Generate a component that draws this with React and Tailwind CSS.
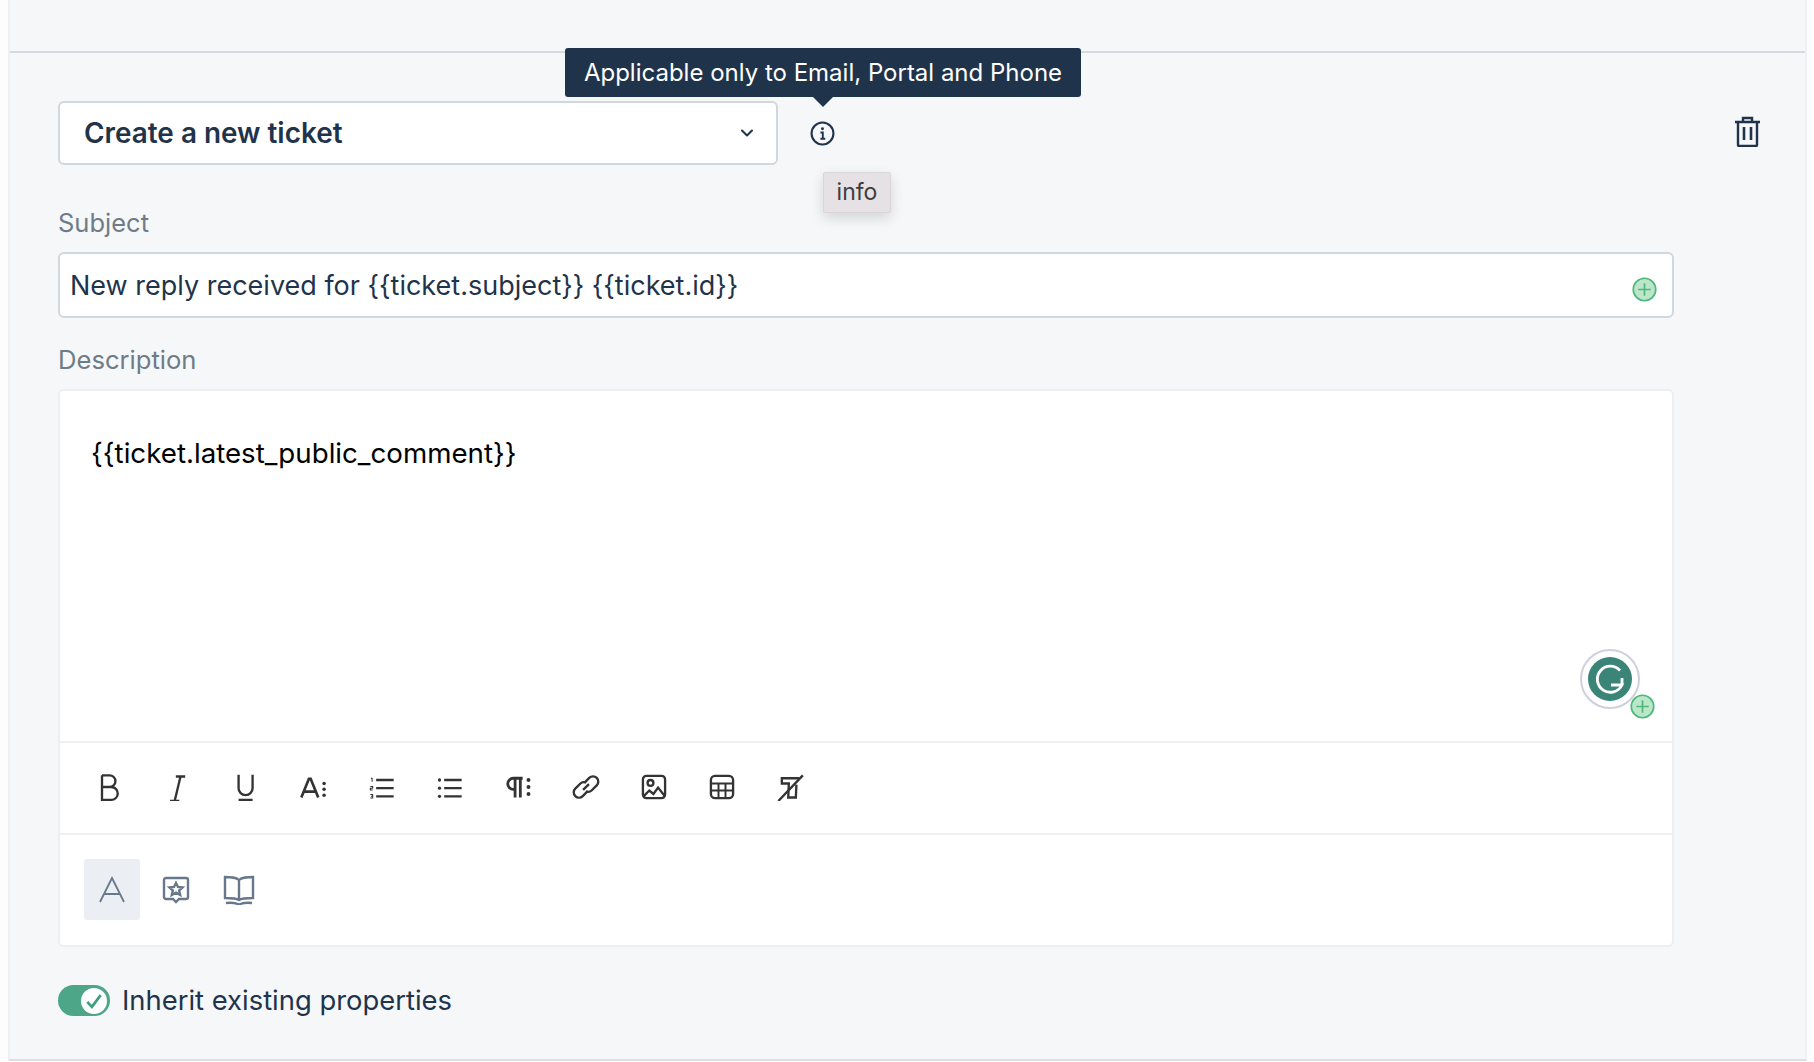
import { ChevronDown } from 'lucide-react';

// Add-variable bubble used in the subject field and on the Grammarly badge
const PlusBubble = ({ className = '' }) => (
  <svg viewBox="0 0 24 24" className={`w-[25px] h-[25px] ${className}`}>
    <circle cx="12" cy="12" r="10.8" fill="#bce6cb" stroke="#4fb878" strokeWidth="1.6" />
    <path d="M12 6v12M6 12h12" stroke="#4fb878" strokeWidth="1.6" fill="none" />
  </svg>
);

const toolbarIcons = [
  <path key="b" d="M6 2v21h8a5.500 5.500 0 0 0 0-11H6m0 0h6.500a5 5 0 0 0 0-10H6" strokeWidth="2" />,
  <path key="i" d="M11 3h8M6 24h8M15 3 10 24" strokeWidth="2" />,
  <path key="u" d="M6.500 1.500v11.500a6 6 0 0 0 12 0V1.500M6.500 23h12" strokeWidth="2" />,
  <g key="a">
    <path d="M2 21 8.500 5h1.500L16.500 21M4.500 16h9.500" strokeWidth="2.300" />
    <circle cx="21.500" cy="9" r="1.500" fill="#333" stroke="none" />
    <circle cx="21.500" cy="14" r="1.500" fill="#333" stroke="none" />
    <circle cx="21.500" cy="19" r="1.500" fill="#333" stroke="none" />
  </g>,
  <g key="ol">
    <path d="M7 6h15M7 13h15M7 20h15" strokeWidth="2" />
    <path d="M2.500 4.500h1v3M2 11.500h2v1.500H2v1.500h2M2 18.500h2v3H2M2.500 20h1.500" strokeWidth="0.900" />
  </g>,
  <g key="ul">
    <path d="M7 6h15M7 13h15M7 20h15" strokeWidth="2" />
    <circle cx="3" cy="6" r="1.400" fill="#333" stroke="none" />
    <circle cx="3" cy="13" r="1.400" fill="#333" stroke="none" />
    <circle cx="3" cy="20" r="1.400" fill="#333" stroke="none" />
  </g>,
  <g key="p">
    <path d="M9.500 21V4.500M14 21V4.500M16 4.500H8a4.800 4.800 0 0 0 0 9.600h1.500" strokeWidth="2.400" />
    <circle cx="21" cy="6" r="1.700" fill="#333" stroke="none" />
    <circle cx="21" cy="12" r="1.700" fill="#333" stroke="none" />
    <circle cx="21" cy="18" r="1.700" fill="#333" stroke="none" />
  </g>,
  <g key="link" strokeWidth="2">
    <path d="M11 8 14.800 4.200a4.500 4.500 0 0 1 6.400 6.400L17 14.800a4.500 4.500 0 0 1-5 1" />
    <path d="M13 16 9.200 19.800a4.500 4.500 0 0 1-6.400-6.400L7 9.200a4.500 4.500 0 0 1 5-1" />
    <path d="m9.500 14.500 5-5" />
  </g>,
  <g key="img" strokeWidth="2">
    <rect x="2.500" y="2.500" width="19" height="19" rx="3" />
    <circle cx="9" cy="8.500" r="2.500" />
    <path d="m3 20 5-5 3.500 3 4-5.500 5.500 7" />
  </g>,
  <g key="tbl" strokeWidth="2">
    <rect x="2.500" y="2.500" width="19" height="19" rx="3.500" />
    <path d="M2.500 9h19M2.500 15h19M9 9v12.500M15 9v12.500" strokeWidth="1.700" />
  </g>,
  <g key="clear" strokeWidth="2">
    <path d="M20 4.500H5V9h6l-.5 12H17l.5-11" />
    <path d="M2 24 23 2" />
  </g>,
];

const App = () => {
  return (
    <div className="h-[1062px] bg-[#fdfdfd] pl-[8px] pr-[7px] font-['Inter',sans-serif] overflow-hidden">
      <div className="h-[1061px] bg-[#f5f7f9] border-x-2 border-b-2 border-x-[#eef0f3] border-b-[#dadfe5]">
        <div className="h-[53px] border-b-2 border-[#d3dae1]" />

        <div className="pl-[48px] pr-[45px] pt-[48px]">
          {/* Action select + delete */}
          <div className="flex items-center">
            <div className="w-[720px] h-[64px] flex items-center justify-between bg-white border-2 border-[#cfd7df] rounded-[6px] pl-[24px] pr-[19px]">
              <span className="pt-[2px] text-[27.900px] font-semibold text-[#1f344b]">Create a new ticket</span>
              <ChevronDown size={20} strokeWidth={2.5} className="text-[#1f344b]" />
            </div>
            <div className="relative ml-[32px] w-[25px] h-[25px]">
              <svg viewBox="0 0 24 24" className="w-[25px] h-[25px] text-[#1f344b]" fill="none" stroke="currentColor">
                <circle cx="12" cy="12" r="10.500" strokeWidth="2" />
                <circle cx="12" cy="7.500" r="1.400" fill="currentColor" stroke="none" />
                <path d="M10 11h2.300v6M10 17h4.600" strokeWidth="1.800" />
              </svg>
              <div className="absolute left-[-245px] top-[-73px] w-[516px] h-[49px] pt-[2px] flex items-center justify-center bg-[#1f344b] rounded-[3px] text-white text-[24px] whitespace-nowrap">
                Applicable only to Email, Portal and Phone
              </div>
              <div className="absolute left-[3px] top-[-24px] w-0 h-0 border-x-[10px] border-x-transparent border-t-[10px] border-t-[#1f344b]" />
              <div className="absolute left-[13px] top-[51px] w-[68px] h-[41px] flex items-center justify-center bg-[#e5e1e5] rounded-[2px] border border-[#d9d6da] shadow-[0_5px_14px_rgba(0,0,0,0.14)] text-[23px] text-[#3d3d3d]">
                info
              </div>
            </div>
            <svg viewBox="0 0 25 31" className="ml-auto mb-[4px] w-[25px] h-[31px] text-[#1f344b]" fill="none" stroke="currentColor" strokeWidth="2.400">
              <path d="M0 6h25M8 6V2h9v4" />
              <path d="M3 6v23a1 1 0 0 0 1 1h17a1 1 0 0 0 1-1V6" />
              <path d="M9 11v13M16 11v13" strokeWidth="2.600" />
            </svg>
          </div>

          {/* Subject */}
          <div className="mt-[43px] text-[25.500px] leading-[30px] text-[#6f7c87]">Subject</div>
          <div className="relative mt-[14px] w-[1616px] h-[66px] flex items-center bg-white border-2 border-[#cfd7df] rounded-[6px] pl-[10px] pt-[2px] text-[27px] text-[#1f344b]">
            New reply received for {'{{ticket.subject}}'} {'{{ticket.id}}'}
            <PlusBubble className="absolute right-[15px] top-[23px]" />
          </div>

          {/* Description editor */}
          <div className="mt-[27px] text-[25.600px] leading-[30px] text-[#6f7c87]">Description</div>
          <div className="mt-[14px] w-[1616px] h-[558px] flex flex-col bg-white border-2 border-[#edf0f3] rounded-[6px]">
            <div className="relative h-[350px] pl-[31px] pt-[45px] text-[27.700px] leading-[34px] text-black">
              {'{{ticket.latest_public_comment}}'}
              <div className="absolute left-[1520px] top-[258px] w-[60px] h-[60px] rounded-full bg-white border-2 border-[#d0d0dc] flex items-center justify-center">
                <svg viewBox="0 0 44 44" className="w-[44px] h-[44px]">
                  <circle cx="22" cy="22" r="22" fill="#3b8578" />
                  <path d="M32 13.500a13 13 0 1 0 2 14.500H23M34 21v7" fill="none" stroke="#fff" strokeWidth="2.800" />
                </svg>
              </div>
              <PlusBubble className="absolute left-[1570px] top-[303px]" />
            </div>

            <div className="h-[92px] flex items-center border-t-2 border-[#edf0f3] pl-[35px] pb-[2px] gap-[40.150px]">
              {toolbarIcons.map((icon, i) => (
                <svg key={i} viewBox="0 0 24 24" className="w-[28px] h-[28px]" fill="none" stroke="#333" strokeWidth="1.800">
                  {icon}
                </svg>
              ))}
            </div>

            <div className="flex-1 flex items-start border-t-2 border-[#edf0f3] pl-[24px] pt-[24px]">
              <div className="w-[56px] h-[61px] flex items-center justify-center bg-[#ebeef2] rounded-[3px]">
                <svg viewBox="0 0 28 28" className="w-[28px] h-[28px]" fill="none" stroke="#67788b" strokeWidth="1.800">
                  <path d="M2 26 14 2l12 24M6.500 18h15" />
                </svg>
              </div>
              <svg viewBox="0 0 28 28" className="ml-[22px] mt-[17px] w-[28px] h-[28px]" fill="none" stroke="#67788b" strokeWidth="2.400">
                <path d="M4 2h20a2 2 0 0 1 2 2v17a2 2 0 0 1-2 2h-7l-3 3-3-3H4a2 2 0 0 1-2-2V4a2 2 0 0 1 2-2Z" />
                <path d="m14 7 2 4 4.500.5-3.300 3 1 4.500-4.200-2.300L9.800 19l1-4.500-3.300-3L12 11Z" />
              </svg>
              <svg viewBox="0 0 32 30" className="ml-[33px] mt-[16px] w-[32px] h-[30px]" fill="none" stroke="#67788b" strokeWidth="2.400">
                <path d="M16 5C13 2 8 2 2 2v21c6 0 11 0 14 2 3-2 8-2 14-2V2c-6 0-11 0-14 3Zm0 0v20" />
                <path d="M3 28c5-.5 9-.5 13 1.500 4-2 8-2 13-1.500" />
              </svg>
            </div>
          </div>

          {/* Inherit toggle */}
          <div className="mt-[33px] flex items-center">
            <div className="w-[52px] h-[31px] flex items-center justify-end pr-[3px] bg-[#4da688] rounded-full">
              <div className="w-[26px] h-[26px] flex items-center justify-center rounded-full bg-white">
                <svg viewBox="0 0 24 24" className="w-[20px] h-[20px]" fill="none" stroke="#3f9d7c" strokeWidth="3.200">
                  <path d="m4 13 5.500 6L20 5" />
                </svg>
              </div>
            </div>
            <span className="ml-[12px] text-[27.400px] text-[#1f344b]">Inherit existing properties</span>
          </div>
        </div>
      </div>
    </div>
  );
};

export default App;
